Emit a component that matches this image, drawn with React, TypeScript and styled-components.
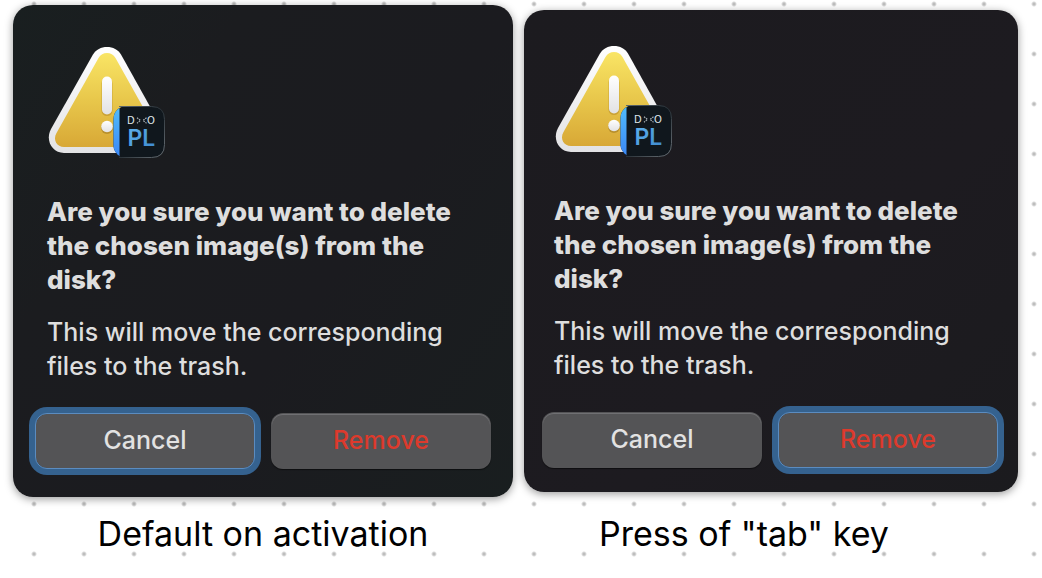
import React, { useId } from "react";
import styled, { createGlobalStyle } from "styled-components";

const GlobalStyle = createGlobalStyle`
  *, *::before, *::after { box-sizing: border-box; }
  body {
    margin: 0;
    background: #fff;
    font-family: Inter, "Liberation Sans", sans-serif;
  }
`;

const Board = styled.main`
  display: grid;
  grid-template-columns: 500fr 494fr;
  grid-template-rows: auto 1fr;
  column-gap: 11px;
  min-height: 100vh;
  padding: 5px 24px 20px 13px;
  background-color: #fff;
  background-image: radial-gradient(circle, #bdbdbd 1px, rgba(189, 189, 189, 0) 3px);
  background-size: 50px 50px;
  background-position: 9px -21px;
`;

const Example = styled.figure`
  display: grid;
  grid-row: span 2;
  grid-template-rows: subgrid;
  margin: 0;
`;

const Caption = styled.figcaption<{ $shift: number }>`
  padding-top: 16px;
  padding-right: ${(p) => p.$shift}px;
  font-size: 34px;
  line-height: 42px;
  text-align: center;
  color: #000;
`;

type Tone = "teal" | "plum";

const Alert = styled.section<{ $tone: Tone }>`
  align-self: center;
  padding: ${(p) => (p.$tone === "teal" ? "42px 22px 28px" : "36px 20px 24px 18px")};
  border-radius: 20px;
  background: ${(p) =>
    p.$tone === "teal"
      ? "linear-gradient(125deg, #191f20 0%, #1b1c1f 28%, #1b1b1f 60%, #191e1f 100%)"
      : "linear-gradient(135deg, #1c1b1f, #1d1b20 60%, #1b1b1e)"};
  box-shadow: 0 2px 8px rgba(0, 0, 0, 0.4);
`;

const Message = styled.div`
  display: flex;
  flex-direction: column;
  align-items: flex-start;
  padding: 0 12px;
  color: #dedede;
  line-height: 34px;
`;

const Artwork = styled.svg`
  display: block;
  width: 120px;
  height: 116px;
  margin: 0 0 32px 1px;
`;

const Title = styled.h2`
  margin: 0 0 18px;
  font-size: 26px;
  font-weight: 800;
`;

const Detail = styled.p`
  margin: 0 0 30px;
  font-size: 25px;
  font-weight: 500;
`;

const Actions = styled.div`
  display: grid;
  grid-template-columns: 1fr 1fr;
  gap: 16px;
`;

const ActionButton = styled.button<{ $danger?: boolean; $focused?: boolean }>`
  height: 56px;
  padding: 0 0 2px;
  border: 1px solid ${(p) => (p.$focused ? "#5b8cc0" : "transparent")};
  border-radius: 12px;
  background: #545456;
  background-clip: ${(p) => (p.$focused ? "padding-box" : "border-box")};
  box-shadow: ${(p) =>
    p.$focused
      ? "0 0 0 6px #35628f"
      : "inset 0 1px 0 #707073, 0 1px 1px rgba(0, 0, 0, 0.5)"};
  color: ${(p) => (p.$danger ? "#dc3a2c" : "#e2e2e2")};
  font-family: inherit;
  font-size: 25px;
  font-weight: 500;
  line-height: 34px;
  outline: none;
`;

function WarningArtwork() {
  const id = useId().replace(/[^a-zA-Z0-9]/g, "");
  return (
    <Artwork viewBox="0 0 120 116" role="img" aria-label="DxO PhotoLab warning">
      <defs>
        <linearGradient id={`${id}y`} x1="0" y1="0" x2="0" y2="1">
          <stop offset="0" stopColor="#f9e565" />
          <stop offset="0.5" stopColor="#e8c74b" />
          <stop offset="1" stopColor="#d8a836" />
        </linearGradient>
        <linearGradient id={`${id}w`} x1="0" y1="0" x2="0" y2="1">
          <stop offset="0" stopColor="#ffffff" />
          <stop offset="1" stopColor="#e2e2e4" />
        </linearGradient>
        <linearGradient id={`${id}b`} x1="0" y1="0" x2="0" y2="1">
          <stop offset="0" stopColor="#52bdfb" />
          <stop offset="1" stopColor="#3a86f6" />
        </linearGradient>
        <linearGradient id={`${id}t`} x1="0" y1="0" x2="1" y2="1">
          <stop offset="0" stopColor="#62b4ee" />
          <stop offset="1" stopColor="#3b86cc" />
        </linearGradient>
        <linearGradient id={`${id}e`} x1="0" y1="0" x2="1" y2="1">
          <stop offset="0" stopColor="#5d676e" />
          <stop offset="0.5" stopColor="#2a3238" />
          <stop offset="1" stopColor="#6b7278" />
        </linearGradient>
        <clipPath id={`${id}c`}>
          <rect x="65.500" y="59" width="51.500" height="52" rx="13" />
        </clipPath>
      </defs>
      <path
        d="M45 7.500C48 2.500 53 0 59 0S70 2.500 73 7.500L114.500 82C119 93.500 114 106 102 106H16C4 106 -3 93.500 3 82Z"
        fill={`url(#${id}w)`}
      />
      <path
        d="M50.500 11C52.500 7.600 55.500 6 59 6S65.500 7.600 67.500 11L109.500 86C113.500 93 109 100 102 100H16C9 100 4.500 93 8.500 86Z"
        fill={`url(#${id}y)`}
      />
      <rect x="53.500" y="31" width="11" height="38" rx="5.500" fill="#b98f2c" opacity="0.6" />
      <circle cx="59" cy="81" r="6" fill="#a98126" opacity="0.7" />
      <rect x="54" y="29.500" width="10" height="38" rx="5" fill={`url(#${id}w)`} />
      <circle cx="59" cy="79.500" r="5.800" fill={`url(#${id}w)`} />
      <g clipPath={`url(#${id}c)`}>
        <rect x="65" y="59" width="52" height="52" fill="#10171d" />
        <rect x="65" y="59" width="6.500" height="52" fill={`url(#${id}b)`} />
      </g>
      <path
        d="M71 59.500H103.500Q116.500 59.500 116.500 72.500V97.500Q116.500 110.500 103.500 110.500H71"
        fill="none"
        stroke={`url(#${id}e)`}
        strokeWidth="1"
      />
      <g fontFamily="DejaVu Sans, sans-serif" fontSize="10" fill="#dfe4e8">
        <text x="79" y="77">D</text>
        <text x="99" y="77">O</text>
      </g>
      <path
        d="M89 70.800L92.500 73.500L89 76.200M98.500 70.800L95 73.500L98.500 76.200"
        fill="none"
        stroke="#a9b0b6"
        strokeWidth="1.200"
        strokeDasharray="1.600 0.900"
      />
      <text
        x="79.500"
        y="99"
        fontFamily="Inter, sans-serif"
        fontSize="23"
        fontWeight="600"
        fill={`url(#${id}t)`}
      >
        PL
      </text>
    </Artwork>
  );
}

interface DeleteAlertProps {
  tone: Tone;
  focused: "cancel" | "remove";
}

function DeleteAlert({ tone, focused }: DeleteAlertProps) {
  const titleId = useId();
  const detailId = useId();
  return (
    <Alert $tone={tone} role="alertdialog" aria-labelledby={titleId} aria-describedby={detailId}>
      <Message>
        <WarningArtwork />
        <Title id={titleId}>Are you sure you want to delete the chosen image(s) from the disk?</Title>
        <Detail id={detailId}>This will move the corresponding files to the trash.</Detail>
      </Message>
      <Actions>
        <ActionButton type="button" $focused={focused === "cancel"}>
          Cancel
        </ActionButton>
        <ActionButton type="button" $danger $focused={focused === "remove"}>
          Remove
        </ActionButton>
      </Actions>
    </Alert>
  );
}

export default function App() {
  return (
    <>
      <GlobalStyle />
      <Board>
        <Example>
          <DeleteAlert tone="teal" focused="cancel" />
          <Caption $shift={0}>Default on activation</Caption>
        </Example>
        <Example>
          <DeleteAlert tone="plum" focused="remove" />
          <Caption $shift={54}>Press of "tab" key</Caption>
        </Example>
      </Board>
    </>
  );
}
